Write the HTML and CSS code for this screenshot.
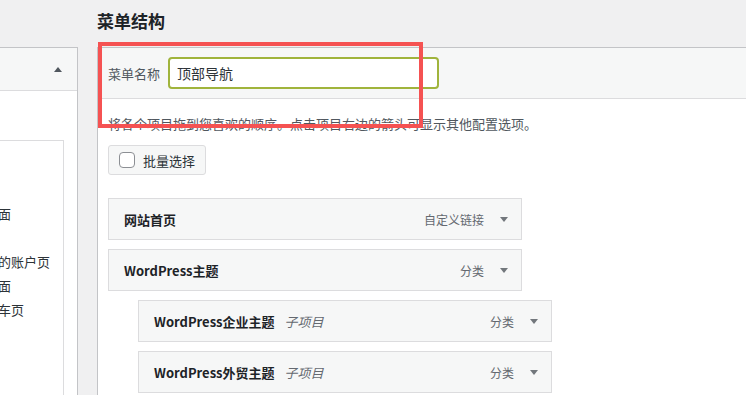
FILE: index.html
```html
<!DOCTYPE html>
<html lang="zh-CN">
<head>
    <meta charset="UTF-8">
    <meta name="viewport" content="width=device-width, initial-scale=1.0">
    <title>菜单结构</title>
    <link rel="stylesheet" href="styles.css">
</head>
<body>
    <div class="page">
        <div class="side">
            <div class="side-box">
                <div class="side-head"><span class="arrow-up"></span></div>
                <div class="side-body">
                    <ul class="check-list">
                        <li>&nbsp;</li>
                        <li>面</li>
                        <li>&nbsp;</li>
                        <li>的账户页</li>
                        <li>面</li>
                        <li>车页</li>
                    </ul>
                </div>
            </div>
        </div>

        <div class="main">
            <h2 class="main-title">菜单结构</h2>
            <div class="menu-box">
                <div class="menu-head">
                    <label class="name-label" for="menuName">菜单名称</label>
                    <input class="name-input" id="menuName" type="text" value="顶部导航">
                </div>
                <div class="menu-body">
                    <p class="hint">将各个项目拖到您喜欢的顺序。点击项目右边的箭头可显示其他配置选项。</p>
                    <button class="bulk-btn"><span class="check"></span>批量选择</button>
                    <ul class="items">
                        <li class="item">
                            <span class="item-title">网站首页</span>
                            <span class="item-type">自定义链接</span>
                            <span class="arrow-down"></span>
                        </li>
                        <li class="item">
                            <span class="item-title">WordPress主题</span>
                            <span class="item-type">分类</span>
                            <span class="arrow-down"></span>
                        </li>
                        <li class="item sub">
                            <span class="item-title">WordPress企业主题</span>
                            <span class="item-note">子项目</span>
                            <span class="item-type">分类</span>
                            <span class="arrow-down"></span>
                        </li>
                        <li class="item sub">
                            <span class="item-title">WordPress外贸主题</span>
                            <span class="item-note">子项目</span>
                            <span class="item-type">分类</span>
                            <span class="arrow-down"></span>
                        </li>
                    </ul>
                </div>
            </div>
            <div class="highlight"></div>
        </div>
    </div>
</body>
</html>
```

FILE: styles.css
```css
* {
    margin: 0;
    padding: 0;
    box-sizing: border-box;
}

body {
    font-family: "Noto Sans CJK SC", "Noto Sans", sans-serif;
    background: #f0f0f1;
    color: #2c3338;
    overflow: hidden;
    height: 100vh;
}

.page {
    display: flex;
    gap: 19px;
    height: calc(100vh + 10px);
}

/* left column, mostly off screen */
.side {
    width: 79px;
    margin-left: -1px;
    display: flex;
    flex-direction: column;
    padding-top: 47px;
}

.side-box {
    flex: 1;
    background: #fff;
    border: 1px solid #c3c4c7;
    display: flex;
    flex-direction: column;
}

.side-head {
    height: 43px;
    background: #f6f7f7;
    border-bottom: 1px solid #dcdcde;
    display: flex;
    justify-content: flex-end;
    align-items: center;
    padding-right: 15px;
}

.arrow-up {
    width: 0;
    height: 0;
    border-left: 4px solid transparent;
    border-right: 4px solid transparent;
    border-bottom: 5px solid #50575e;
}

.side-body {
    flex: 1;
    display: flex;
    flex-direction: column;
    padding: 49px 13px 0 0;
}

.check-list {
    flex: 1;
    list-style: none;
    margin-left: -30px;
    padding: 37px 0 0 27px;
    border: 1px solid #dcdcde;
    white-space: nowrap;
    overflow: hidden;
    font-size: 13px;
    line-height: 24px;
    color: #2c3338;
}

/* menu structure */
.main {
    flex: 1;
    position: relative;
    display: flex;
    flex-direction: column;
}

.main-title {
    font-size: 17px;
    line-height: 24px;
    font-weight: 700;
    color: #1d2327;
    padding: 9px 0 14px;
}

.menu-box {
    flex: 1;
    background: #fff;
    border: 1px solid #c3c4c7;
    border-right: none;
}

.menu-head {
    display: flex;
    align-items: center;
    gap: 8px;
    padding: 9px 10px;
    background: #f6f7f7;
    border-bottom: 1px solid #dcdcde;
}

.name-label {
    font-size: 13px;
    color: #50575e;
}

.name-input {
    width: 271px;
    height: 32px;
    border: 2px solid #a0b43c;
    border-radius: 4px;
    padding: 0 7px;
    font-family: inherit;
    font-size: 14px;
    color: #2c3338;
    background: #fff;
    outline: none;
}

.menu-body {
    padding: 0 10px;
}

.hint {
    margin-top: 15px;
    font-size: 13px;
    line-height: 19px;
    color: #50575e;
}

.bulk-btn {
    margin-top: 12px;
    display: flex;
    align-items: center;
    gap: 8px;
    width: max-content;
    height: 30px;
    padding: 0 10px;
    background: #f6f7f7;
    border: 1px solid #dcdcde;
    border-radius: 3px;
    font-family: inherit;
    font-size: 13px;
    color: #2c3338;
}

.check {
    width: 16px;
    height: 16px;
    background: #fff;
    border: 1px solid #8c8f94;
    border-radius: 4px;
}

.items {
    list-style: none;
    margin-top: 23px;
}

.item {
    width: 414px;
    height: 42px;
    margin-bottom: 9px;
    display: flex;
    align-items: center;
    padding: 0 13px 0 15px;
    background: #f6f7f7;
    border: 1px solid #dcdcde;
    font-size: 13px;
}

.item.sub {
    margin-left: 30px;
}

.item-title {
    font-weight: 700;
    color: #1d2327;
}

.item-note {
    margin-left: 10px;
    font-style: italic;
    color: #646970;
}

.item-type {
    margin-left: auto;
    font-size: 12px;
    color: #646970;
}

.arrow-down {
    margin-left: 16px;
    width: 0;
    height: 0;
    border-left: 4px solid transparent;
    border-right: 4px solid transparent;
    border-top: 5px solid #72777c;
}

/* red annotation box drawn over the screenshot */
.highlight {
    position: absolute;
    left: 1px;
    top: 42px;
    width: 325px;
    height: 86px;
    border: 4px solid #f55252;
    pointer-events: none;
}
```
